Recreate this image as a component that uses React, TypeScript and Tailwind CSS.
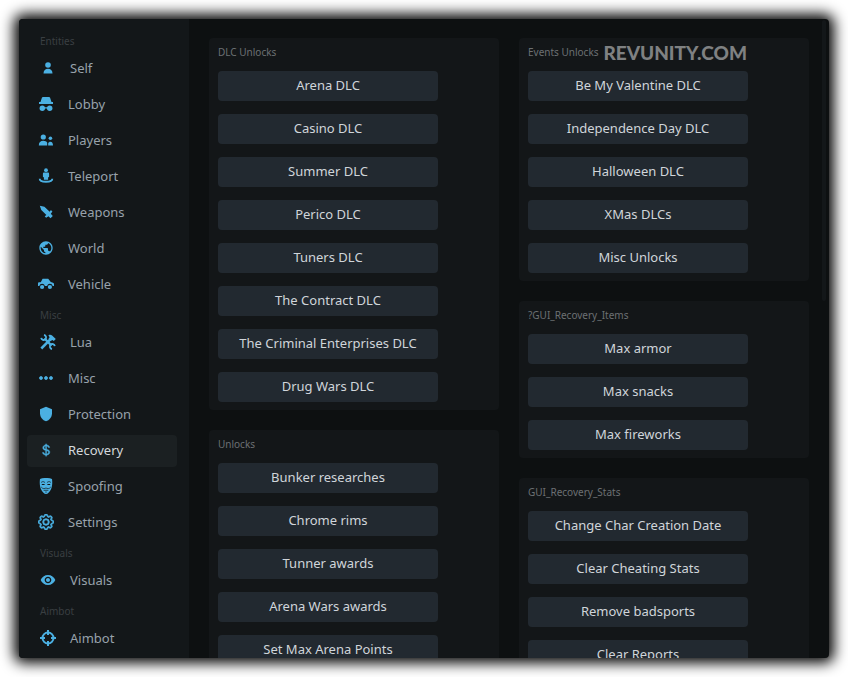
import type { ReactNode } from 'react';
import { MdPublic, MdShield, MdVisibility } from 'react-icons/md';
import { BsCurrencyDollar, BsGear, BsThreeDots } from 'react-icons/bs';

interface NavItem {
  label: string;
  icon: ReactNode;
}

interface NavSection {
  title: string;
  items: NavItem[];
}

interface Group {
  title: string;
  actions: string[];
}

function PersonIcon() {
  return (
    <svg className="w-4 h-4" viewBox="0 0 16 16" fill="currentColor">
      <circle cx="8" cy="5" r="2.8" />
      <path d="M3.5 13.5c0-3 1.8-4.7 4.5-4.7s4.5 1.7 4.5 4.7z" />
    </svg>
  );
}

function SpyIcon() {
  return (
    <svg className="w-4 h-4" viewBox="0 0 16 16" fill="currentColor">
      <path d="M5 1h6c.6 0 .9.300 1.100.8l1.400 4.200H15v2H1V6h1.500l1.400-4.200C4.100 1.300 4.400 1 5 1z" />
      <circle cx="4.300" cy="12.300" r="2.700" />
      <circle cx="11.700" cy="12.300" r="2.700" />
      <path d="M6 11.200h4v1.300H6z" />
    </svg>
  );
}

function PlayersIcon() {
  return (
    <svg className="w-4 h-4" viewBox="0 0 16 16" fill="currentColor">
      <circle cx="5.300" cy="5" r="2.600" />
      <path d="M.8 13.400c0-3 1.700-4.600 4.500-4.600 1.800 0 3.100.7 3.900 1.900v2.700z" />
      <circle cx="12.400" cy="6.300" r="1.800" />
      <path d="M10.200 13.400v-2.200c.5-1 1.200-1.500 2.200-1.500 1.700 0 2.600 1.400 2.600 3.700z" />
    </svg>
  );
}

function TeleportIcon() {
  return (
    <svg className="w-4 h-4" viewBox="0 0 16 16" fill="currentColor">
      <circle cx="8" cy="2.200" r="1.900" />
      <path d="M6.200 4.600h3.600c.8 0 1.300.5 1.300 1.300V8.700l-1 .8v2.300H5.900V9.500l-1-.8V5.900c0-.8.5-1.300 1.300-1.300z" />
      <path d="M1.700 10.800c0 2 3 3 6.300 3s6.300-1 6.300-3" fill="none" stroke="currentColor" strokeWidth="1.900" />
    </svg>
  );
}

function DaggerIcon() {
  return (
    <svg className="w-4 h-4" viewBox="0 0 16 16" fill="currentColor">
      <path d="M1.800 1.800l4.600.9 5.300 5 1.200-1.600 1.500 1.400-1.600 2.300 2 2.100-2.300 2.300-2-2-2.400 1.600-1.400-1.500 1.700-1.200L3.300 5.900z" />
    </svg>
  );
}

function CarIcon() {
  return (
    <svg className="w-4 h-4" viewBox="0 0 16 16" fill="currentColor">
      <path d="M4.600 2.800h5.600l2.600 3.300 2.200.6c.7.2 1 .6 1 1.300v2h-1.300a2.900 2.900 0 0 0-5.600 0H6.900a2.900 2.900 0 0 0-5.600 0H0V7.500c0-.8.5-1.300 1.300-1.300h1.500z" />
      <circle cx="4.100" cy="11" r="2.100" />
      <circle cx="11.900" cy="11" r="2.100" />
    </svg>
  );
}

function ToolsIcon() {
  return (
    <svg className="w-4 h-4" viewBox="0 0 16 16" fill="none" stroke="currentColor">
      <path d="M1.300 14.500L10.600 5.200" strokeWidth="2.500" />
      <path d="M8.400 1.300c1.400-.8 2.700-.6 3.700.3L15.800 5l-2 2-1.400-1-2 1-2-1.900 1.200-1.900z" fill="currentColor" stroke="none" />
      <path d="M4.400 4.400l7.200 7.200" strokeWidth="2.200" />
      <path d="M1.200 3.800a2.500 2.500 0 0 0 4.300 1.400A2.600 2.600 0 0 0 4 1" strokeWidth="1.800" />
      <path d="M14.800 12.200a2.500 2.500 0 0 0-4.300-1.400A2.600 2.600 0 0 0 12 15" strokeWidth="1.800" />
    </svg>
  );
}

function MaskIcon() {
  return (
    <svg className="w-4 h-4" viewBox="0 0 16 16">
      <path d="M2 1C5-.4 11-.4 14 1c.5 3.600.3 7.400-1 10.200C11.900 13.800 9.800 16 8 16s-3.900-2.200-5-4.800C1.700 8.400 1.500 4.600 2 1z" fill="currentColor" />
      <g fill="none" stroke="#131719" strokeLinecap="round">
        <path d="M3.400 4.200C4.500 3.200 5.800 3.400 6.800 4.400M12.600 4.200c-1.100-1-2.400-.8-3.400.2" strokeWidth="0.700" />
        <path d="M4.200 6.500h2M9.800 6.500h2" strokeWidth="1" />
        <path d="M3.500 9.400C4.800 11.200 6.800 10.600 8 10c1.200.6 3.200 1.200 4.500-.6M6 12.300h4" strokeWidth="0.700" />
        <path d="M8 13.600v1" strokeWidth="0.600" />
      </g>
    </svg>
  );
}

function CrosshairIcon() {
  return (
    <svg className="w-4 h-4" viewBox="0 0 16 16" fill="none" stroke="currentColor" strokeWidth="2">
      <circle cx="8" cy="8" r="5.500" />
      <path d="M8 0v5M8 11v5M0 8h5M11 8h5" />
    </svg>
  );
}

const sections: NavSection[] = [
  {
    title: 'Entities',
    items: [
      { label: 'Self', icon: <PersonIcon /> },
      { label: 'Lobby', icon: <SpyIcon /> },
      { label: 'Players', icon: <PlayersIcon /> },
      { label: 'Teleport', icon: <TeleportIcon /> },
      { label: 'Weapons', icon: <DaggerIcon /> },
      { label: 'World', icon: <MdPublic className="w-4 h-4" /> },
      { label: 'Vehicle', icon: <CarIcon /> },
    ],
  },
  {
    title: 'Misc',
    items: [
      { label: 'Lua', icon: <ToolsIcon /> },
      { label: 'Misc', icon: <BsThreeDots className="w-4 h-4" strokeWidth="0.8" /> },
      { label: 'Protection', icon: <MdShield className="w-4 h-4" /> },
      { label: 'Recovery', icon: <BsCurrencyDollar className="w-[14px] h-[14px]" strokeWidth="0.5" /> },
      { label: 'Spoofing', icon: <MaskIcon /> },
      { label: 'Settings', icon: <BsGear className="w-4 h-4" strokeWidth="0.9" /> },
    ],
  },
  { title: 'Visuals', items: [{ label: 'Visuals', icon: <MdVisibility className="w-4 h-4" /> }] },
  { title: 'Aimbot', items: [{ label: 'Aimbot', icon: <CrosshairIcon /> }] },
];

const columns: Group[][] = [
  [
    {
      title: 'DLC Unlocks',
      actions: [
        'Arena DLC',
        'Casino DLC',
        'Summer DLC',
        'Perico DLC',
        'Tuners DLC',
        'The Contract DLC',
        'The Criminal Enterprises DLC',
        'Drug Wars DLC',
      ],
    },
    {
      title: 'Unlocks',
      actions: ['Bunker researches', 'Chrome rims', 'Tunner awards', 'Arena Wars awards', 'Set Max Arena Points'],
    },
  ],
  [
    {
      title: 'Events Unlocks',
      actions: ['Be My Valentine DLC', 'Independence Day DLC', 'Halloween DLC', 'XMas DLCs', 'Misc Unlocks'],
    },
    { title: '?GUI_Recovery_Items', actions: ['Max armor', 'Max snacks', 'Max fireworks'] },
    {
      title: 'GUI_Recovery_Stats',
      actions: ['Change Char Creation Date', 'Clear Cheating Stats', 'Remove badsports', 'Clear Reports'],
    },
  ],
];

function Sidebar({ active }: { active: string }) {
  return (
    <nav className="w-[170px] shrink-0 bg-[#131719] pt-2 pl-2 pr-3 overflow-hidden">
      {sections.map((section) => (
        <div key={section.title}>
          <h2 className="h-[26px] pl-[13px] pt-1 text-[10px] leading-5 text-[#3a3f42]">{section.title}</h2>
          <ul className="flex flex-col gap-1">
            {section.items.map((item) => (
              <li key={item.label} className="group/item">
                <button
                  type="button"
                  className={`flex w-full h-8 items-center gap-[14px] rounded pl-[11px] pb-0.5 group-first/item:pl-[13px] text-[13px] leading-5 text-left ${
                    item.label === active ? 'bg-[#1b2022] text-[#d3d8dc]' : 'text-[#98a2ab]'
                  }`}
                >
                  <span className="flex w-4 justify-center text-[#4bb0e2]">{item.icon}</span>
                  {item.label}
                </button>
              </li>
            ))}
          </ul>
        </div>
      ))}
    </nav>
  );
}

function GroupBox({ title, actions }: Group) {
  return (
    <section className="rounded bg-[#131618] px-[9px] pb-2">
      <h3 className="h-[33px] pt-1 text-[10px] leading-5 text-[#6c7073]">{title}</h3>
      <div className="flex flex-col items-start gap-[13px]">
        {actions.map((action) => (
          <button
            key={action}
            type="button"
            className="w-[220px] h-[30px] pb-0.5 rounded bg-[#222930] text-[13px] leading-5 text-[#d0d5da]"
          >
            {action}
          </button>
        ))}
      </div>
    </section>
  );
}

export default function App() {
  return (
    <div className="h-screen bg-white p-[19px] font-['Noto_Sans',sans-serif]">
      <div className="flex h-full overflow-hidden rounded bg-[#0d1011] shadow-[0_0_14px_5px_#000]">
        <Sidebar active="Recovery" />
        <main className="relative flex-1 overflow-hidden">
          <div className="grid grid-cols-2 gap-5 px-5 pt-[19px]">
            {columns.map((groups, i) => (
              <div key={i} className="flex flex-col gap-5">
                {groups.map((g) => (
                  <GroupBox key={g.title} {...g} />
                ))}
              </div>
            ))}
          </div>
          <div className="absolute top-px right-[3px] w-1 h-[281px] rounded bg-[#131719]" />
          <span className="absolute top-5 right-[82px] font-['Lato',sans-serif] text-[19px] leading-7 font-black text-[#7f8182]">
            REVUNITY.COM
          </span>
        </main>
      </div>
    </div>
  );
}
